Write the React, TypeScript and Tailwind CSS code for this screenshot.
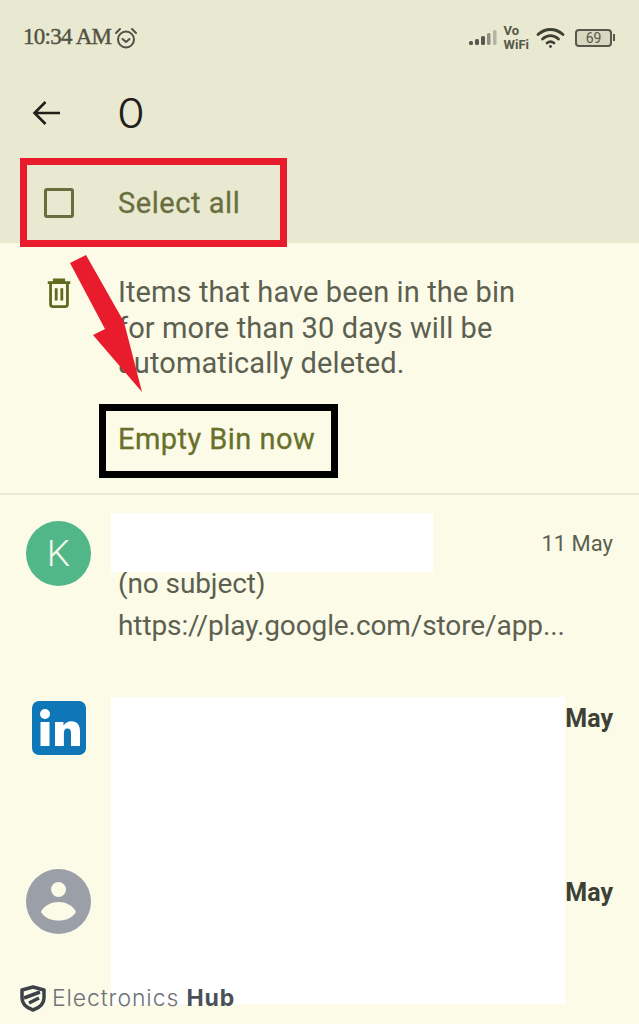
function AlarmIcon() {
  return (
    <svg width="24" height="24" viewBox="0 0 24 24" fill="none" stroke="#4f5244" strokeWidth="2" strokeLinecap="round" strokeLinejoin="round">
      <circle cx="12" cy="13.5" r="8" />
      <path d="M8.5 13l3.5 3 3.5-3" />
      <path d="M2 7l4-4M22 7l-4-4" />
    </svg>
  );
}

function SignalIcon() {
  return (
    <svg width="30" height="20" viewBox="0 0 30 20">
      <rect x="1" y="13" width="4" height="4" rx="1.5" fill="#55584a" />
      <rect x="7" y="11" width="4" height="6" rx="1.5" fill="#55584a" />
      <rect x="13" y="8" width="4" height="9" rx="1.5" fill="#55584a" />
      <rect x="19" y="5" width="3.5" height="12" rx="1.5" fill="#8f9180" />
      <rect x="25" y="2" width="3.5" height="15" rx="1.5" fill="#b4b5a2" />
    </svg>
  );
}

function WifiIcon() {
  return (
    <svg width="30" height="22" viewBox="0 0 30 22" fill="none" stroke="#3d4035" strokeWidth="2.8" strokeLinecap="round">
      <path d="M2 7.500C9.500 .8 19.500 .8 27 7.500" />
      <path d="M6.500 12C11.500 7.600 17.500 7.600 22.500 12" />
      <path d="M11 16c2.400-1.800 4.600-1.800 7 0" />
      <circle cx="14.500" cy="19.500" r="1.400" fill="#3d4035" stroke="none" />
    </svg>
  );
}

function LinkedInIcon() {
  return (
    <svg width="54" height="54" viewBox="0 0 54 54">
      <rect width="54" height="54" rx="7" fill="#0f76b8" />
      <circle cx="13" cy="13" r="5" fill="#fff" />
      <rect x="8.500" y="21" width="9" height="24" fill="#fff" />
      <path d="M23 21h8.500v3.600c1.700-2.700 4.400-4.300 7.700-4.300 6.200 0 8.800 3.900 8.800 10.400V45h-9V32.500c0-3.200-1-5-3.500-5-2.800 0-3.600 2.100-3.600 5V45H23z" fill="#fff" />
    </svg>
  );
}

function PersonAvatar() {
  return (
    <svg width="65" height="65" viewBox="0 0 65 65">
      <circle cx="32.500" cy="32.500" r="32.500" fill="#9a9fa8" />
      <circle cx="32.500" cy="20.500" r="7.500" fill="#fbfbe8" />
      <path d="M15 43c3-7 11-10 17.500-10S47 36 50 43c-3.500 6-10 8.500-17.500 8.500S18.500 49 15 43z" fill="#fbfbe8" />
    </svg>
  );
}

export default function App() {
  return (
    <div className="relative h-[1024px] w-[639px] overflow-hidden bg-[#fbfbe8] font-['Roboto',sans-serif]">
      {/* header */}
      <div className="h-[243px] bg-[#e9e8d0]">
        <div className="flex h-[75px] items-center justify-between pl-[23px] pr-[24px]">
          <div className="flex items-center gap-[3px] text-[#4f5244]">
            <span className="font-['Liberation_Serif',serif] text-[23px] tracking-[-0.7px] [-webkit-text-stroke:0.4px_#4f5244]">10:34 AM</span>
            <AlarmIcon />
          </div>
          <div className="flex items-center gap-[6px]">
            <SignalIcon />
            <div className="flex flex-col items-start text-[13px] font-bold leading-[14px] text-[#55584a]">
              <span>Vo</span>
              <span>WiFi</span>
            </div>
            <div className="ml-[1px] mr-[3px]">
              <WifiIcon />
            </div>
            <div className="flex items-center gap-[1px]">
              <div className="flex h-[18px] w-[37px] items-center justify-center rounded-[4px] border-2 border-[#55584a] bg-[#d8d7bf] text-[14px] leading-none text-[#55584a]">
                69
              </div>
              <div className="h-[7px] w-[2px] bg-[#55584a]" />
            </div>
          </div>
        </div>

        <div className="flex h-[76px] items-center pl-[32px]">
          <svg width="28" height="28" viewBox="0 0 28 28" fill="none" stroke="#1f2019" strokeWidth="2.600">
            <path d="M28 14H2.500M13.500 3L2.500 14l11 11" />
          </svg>
          <span className="ml-[57px] origin-left scale-x-110 font-['Inter',sans-serif] text-[41px] font-light leading-none text-[#1f2019]">0</span>
        </div>

        <div className="relative z-10 ml-[20px] mt-[7px] flex h-[89px] w-[267px] items-center border-[7px] border-[#e81c2c] pl-[17px] pt-[3px]">
          <div className="-mt-[3px] h-[30px] w-[30px] rounded-[3px] border-[3px] border-[#686f3e]" />
          <span className="ml-[44px] text-[29px] tracking-[0.55px] text-[#686f3e] [-webkit-text-stroke:0.3px_#686f3e]">Select all</span>
        </div>
      </div>

      {/* bin notice */}
      <div className="flex h-[252px] items-start border-b-2 border-[#e9e9dc] pl-[46px] pt-[32px]">
        <svg className="mt-[3px]" width="26" height="30" viewBox="0 0 26 32" fill="none" stroke="#5f6a1e" strokeWidth="3">
          <path d="M1 5h24M8 5V2h10v3M4 5v23c0 1.500 1 2.500 2.500 2.500h13c1.500 0 2.500-1 2.500-2.500V5M10 11v13M16 11v13" />
        </svg>
        <div className="ml-[46px]">
          <p className="w-[405px] text-[29px] leading-[35.500px] tracking-[0.1px] text-[#5c6050]">
            Items that have been in the bin for more than 30 days will be automatically deleted.
          </p>
          <div className="-ml-[19px] mt-[22px] flex h-[74px] w-[239px] items-center border-[7px] border-black pb-[1px] pl-[12px]">
            <span className="whitespace-nowrap text-[29px] tracking-[0.45px] text-[#68702a] [-webkit-text-stroke:0.3px_#68702a]">Empty Bin now</span>
          </div>
        </div>
      </div>

      {/* messages */}
      <div className="flex h-[175px] pl-[26px] pr-[26px] pt-[26px]">
        <div className="flex h-[65px] w-[65px] shrink-0 items-center justify-center rounded-full bg-[#52b788] text-[37px] font-light text-[#f4f8e8]">
          K
        </div>
        <div className="ml-[27px] min-w-0 flex-1">
          <div className="flex h-[35px] items-end justify-end pb-[1px] text-[22px] leading-none text-[#5c6050]">11 May</div>
          <p className="mt-[11px] whitespace-nowrap text-[28px] leading-[34px] tracking-[-0.1px] text-[#5c6050]">(no subject)</p>
          <p className="mt-[8px] whitespace-nowrap text-[28px] leading-[34px] tracking-[-0.1px] text-[#5c6050]">https://play.google.com/store/app...</p>
        </div>
      </div>
      <div className="flex h-[199px] items-start justify-between pl-[32px] pr-[26px] pt-[31px]">
        <LinkedInIcon />
        <span className="mt-[3px] text-[25px] font-bold leading-[30px] text-[#3d4035]">May</span>
      </div>
      <div className="flex items-start justify-between pl-[26px] pr-[26px]">
        <PersonAvatar />
        <span className="mt-[9px] text-[25px] font-bold leading-[30px] text-[#3d4035]">May</span>
      </div>

      {/* overlays on the screenshot */}
      <div className="absolute left-[111px] top-[513px] h-[59px] w-[322px] bg-white" />
      <div className="absolute left-[111px] top-[697px] h-[307px] w-[454px] bg-white" />
      <svg className="absolute left-0 top-0" width="200" height="420" viewBox="0 0 200 420">
        <polygon points="70,263 86,255 124,322 142,392 93,335 105,329" fill="#e81c2c" />
      </svg>
      <div className="absolute left-[20px] top-[985px] flex items-center gap-[6px]">
        <svg width="26" height="27" viewBox="0 0 26 27" fill="none" stroke="#3c4248" strokeWidth="3.500" strokeLinejoin="round">
          <path d="M2 5l11-3 11 3v8c0 6-5 10-11 12C7 23 2 19 2 13z" />
          <path d="M4 13l16-6M9 18l10-5" />
        </svg>
        <span className="font-['Inter',sans-serif] text-[23px] font-light leading-none tracking-[0.9px] text-[#6d7278]">
          Electronics <span className="font-bold text-[#4a5058]">Hub</span>
        </span>
      </div>
    </div>
  );
}
